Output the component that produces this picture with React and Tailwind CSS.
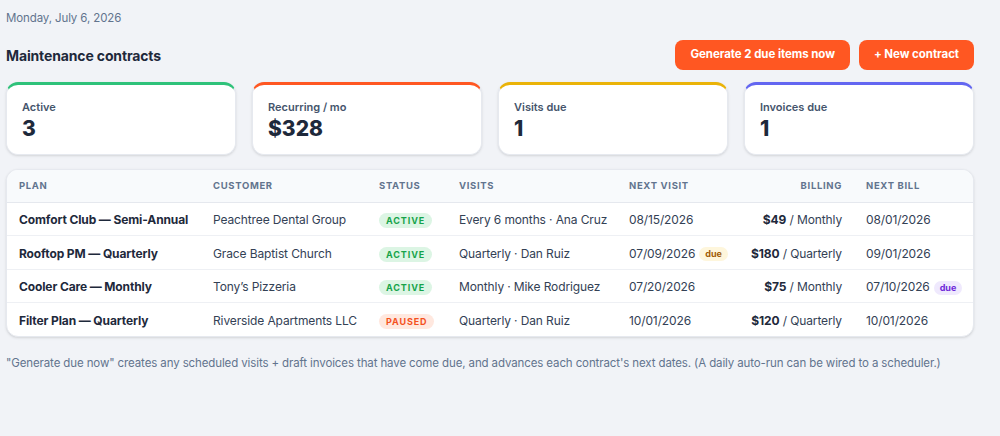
export default function App() {
  const stats = [
    { label: "Active", value: "3", border: "border-t-[#2fc27a]" },
    { label: "Recurring / mo", value: "$328", border: "border-t-[#ff5722]" },
    { label: "Visits due", value: "1", border: "border-t-[#eab308]" },
    { label: "Invoices due", value: "1", border: "border-t-[#6366f1]" },
  ];

  const rows = [
    {
      plan: "Comfort Club — Semi-Annual",
      customer: "Peachtree Dental Group",
      status: "active",
      visits: "Every 6 months · Ana Cruz",
      nextVisit: "08/15/2026",
      price: "$49",
      cycle: "Monthly",
      nextBill: "08/01/2026",
    },
    {
      plan: "Rooftop PM — Quarterly",
      customer: "Grace Baptist Church",
      status: "active",
      visits: "Quarterly · Dan Ruiz",
      nextVisit: "07/09/2026",
      visitDue: true,
      price: "$180",
      cycle: "Quarterly",
      nextBill: "09/01/2026",
    },
    {
      plan: "Cooler Care — Monthly",
      customer: "Tony’s Pizzeria",
      status: "active",
      visits: "Monthly · Mike Rodriguez",
      nextVisit: "07/20/2026",
      price: "$75",
      cycle: "Monthly",
      nextBill: "07/10/2026",
      billDue: true,
    },
    {
      plan: "Filter Plan — Quarterly",
      customer: "Riverside Apartments LLC",
      status: "paused",
      visits: "Quarterly · Dan Ruiz",
      nextVisit: "10/01/2026",
      price: "$120",
      cycle: "Quarterly",
      nextBill: "10/01/2026",
    },
  ];

  return (
    <div
      className="min-h-screen bg-[#f1f3f7] text-[#1e293b] px-[6px] pt-[10px]"
      style={{ fontFamily: "Inter, 'Noto Sans', sans-serif" }}
    >
      <div className="w-[968px]">
        {/* DATE */}
        <div className="text-[11.5px] text-slate-500 leading-[16px] tracking-[-0.01em]">Monday, July 6, 2026</div>

        {/* HEADER */}
        <div className="flex items-center justify-between mt-[14px]">
          <h1 className="text-[14px] font-bold text-[#1e293b] tracking-[-0.01em]">Maintenance contracts</h1>
          <div className="flex gap-[9px]">
            <button className="h-[30px] px-[15px] rounded-lg bg-[#ff5722] text-white text-[11.5px] font-bold tracking-[-0.005em]">
              Generate 2 due items now
            </button>
            <button className="h-[30px] px-[15px] rounded-lg bg-[#ff5722] text-white text-[11.5px] font-bold tracking-[-0.005em]">
              + New contract
            </button>
          </div>
        </div>

        {/* STATS */}
        <div className="grid grid-cols-4 gap-4 mt-[12px]">
          {stats.map((s) => (
            <div
              key={s.label}
              className={`h-[73px] bg-white rounded-xl border border-[#e6e9ef] border-t-[3px] ${s.border} shadow-sm px-[15px] pt-[15px]`}
            >
              <div className="text-[11px] font-semibold text-slate-600 leading-[14px]">{s.label}</div>
              <div className="text-[21px] font-extrabold text-[#1e293b] leading-[26px] mt-[2px]">{s.value}</div>
            </div>
          ))}
        </div>

        {/* TABLE */}
        <div className="mt-[14px] bg-white rounded-xl border border-[#e6e9ef] shadow-sm overflow-hidden">
          <table className="w-full table-fixed border-collapse">
            <colgroup>
              <col className="w-[194px]" />
              <col className="w-[166px]" />
              <col className="w-[80px]" />
              <col className="w-[170px]" />
              <col className="w-[120px]" />
              <col className="w-[117px]" />
              <col />
            </colgroup>
            <thead>
              <tr className="bg-[#f8fafc] border-b border-[#e5e8ee] text-[9.5px] font-bold tracking-[0.07em] text-slate-500 uppercase">
                <th className="h-[32px] px-3 text-left">Plan</th>
                <th className="px-3 text-left">Customer</th>
                <th className="px-3 text-left">Status</th>
                <th className="px-3 text-left">Visits</th>
                <th className="px-3 text-left">Next visit</th>
                <th className="px-3 text-right">Billing</th>
                <th className="px-3 text-left">Next bill</th>
              </tr>
            </thead>
            <tbody className="text-[12px] text-[#1e293b] tracking-[-0.01em]">
              {rows.map((r, i) => (
                <tr key={r.plan} className={i < rows.length - 1 ? "border-b border-[#eef0f4]" : ""}>
                  <td className="h-[33.5px] px-3 pt-[3px] font-bold whitespace-nowrap">{r.plan}</td>
                  <td className="px-3 pt-[3px] text-[#334155] whitespace-nowrap">{r.customer}</td>
                  <td className="px-3 pt-[3px]">
                    {r.status === "active" ? (
                      <span className="inline-block rounded-full bg-[#dcf5e4] text-[#16a34a] text-[9px] font-bold tracking-[0.1em] px-[7px] leading-[15px]">
                        ACTIVE
                      </span>
                    ) : (
                      <span className="inline-block rounded-full bg-[#ffe8df] text-[#f4511e] text-[9px] font-bold tracking-[0.1em] px-[7px] leading-[15px]">
                        PAUSED
                      </span>
                    )}
                  </td>
                  <td className="px-3 pt-[3px] text-[#334155] whitespace-nowrap">{r.visits}</td>
                  <td className="px-3 pt-[3px] text-[#334155] whitespace-nowrap">
                    {r.nextVisit}
                    {r.visitDue && (
                      <span className="ml-[4px] inline-block rounded-full bg-[#fef6dc] text-[#a15c07] text-[9px] font-bold px-[6px] leading-[14px] align-middle tracking-normal">
                        due
                      </span>
                    )}
                  </td>
                  <td className="px-3 pt-[3px] text-right text-[#334155] whitespace-nowrap">
                    <span className="font-bold text-[#1e293b]">{r.price}</span> / {r.cycle}
                  </td>
                  <td className="px-3 pt-[3px] text-[#334155] whitespace-nowrap">
                    {r.nextBill}
                    {r.billDue && (
                      <span className="ml-[4px] inline-block rounded-full bg-[#efe9fd] text-[#6d28d9] text-[9px] font-bold px-[6px] leading-[14px] align-middle tracking-normal">
                        due
                      </span>
                    )}
                  </td>
                </tr>
              ))}
            </tbody>
          </table>
        </div>

        {/* NOTE */}
        <p className="mt-[18px] text-[11.5px] text-slate-500 whitespace-nowrap tracking-[-0.01em]">
          "Generate due now" creates any scheduled visits + draft invoices that have come due, and advances each contract's next dates. (A daily auto-run can be wired to a scheduler.)
        </p>
      </div>
    </div>
  );
}
